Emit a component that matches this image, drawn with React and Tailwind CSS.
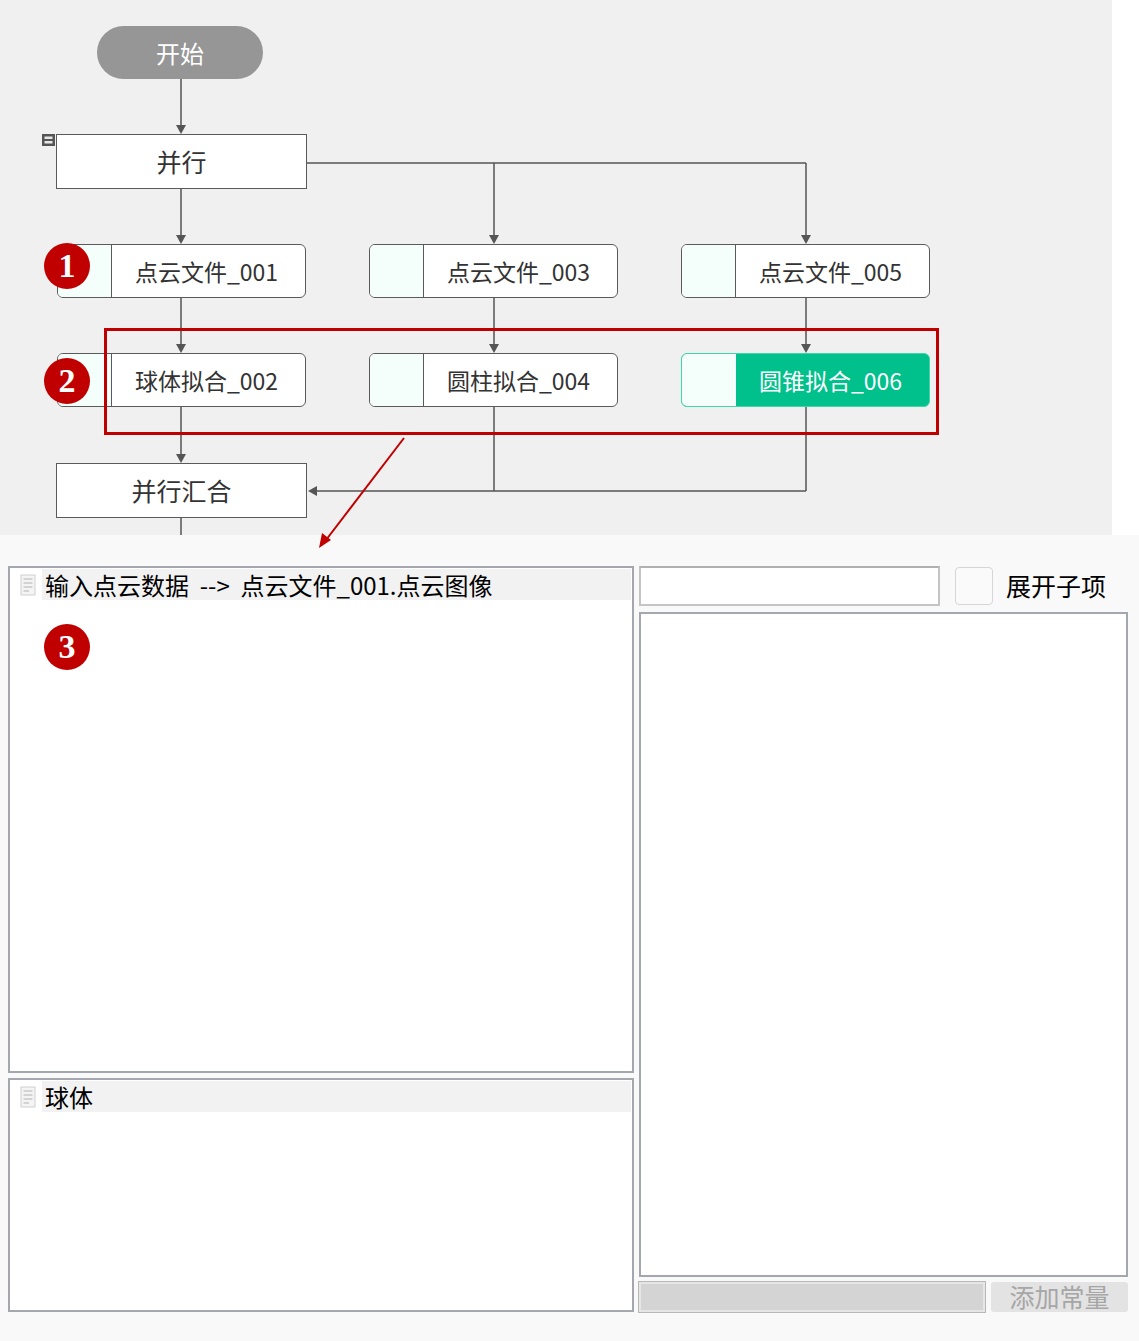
import React from "react";

const FONT = { fontFamily: '"Microsoft YaHei", "Noto Sans CJK SC", "Noto Sans", sans-serif' };

function Badge({ n, className }) {
  return (
    <div
      className={`absolute w-[46px] h-[46px] rounded-full bg-[#c00000] flex items-center justify-center text-white text-[34px] font-bold leading-none ${className}`}
      style={{ fontFamily: '"Liberation Serif", "DejaVu Serif", serif' }}
    >
      {n}
    </div>
  );
}

function FlowNode({ label, className, active }) {
  return (
    <div
      className={`absolute w-[249px] h-[54px] rounded-[6px] border-[1.5px] flex overflow-hidden ${
        active ? "border-[#3fd7a8] bg-[#00c08b]" : "border-[#5a5a5a] bg-white"
      } ${className}`}
    >
      <div className={`w-[54px] h-full bg-[#f4fffc] ${active ? "" : "border-r-[1.5px] border-[#5a5a5a]"}`} />
      <div
        className={`flex-1 flex items-center justify-center text-[23px] pr-1 ${active ? "text-white" : "text-[#333]"}`}
      >
        {label}
      </div>
    </div>
  );
}

function RectNode({ label, className }) {
  return (
    <div
      className={`absolute w-[251px] h-[55px] bg-white border-[1.5px] border-[#5a5a5a] flex items-center justify-center text-[25px] text-[#333] ${className}`}
    >
      {label}
    </div>
  );
}

function Connectors() {
  const s = "#555";
  const down = (x, y) => <polygon points={`${x - 5},${y - 9} ${x + 5},${y - 9} ${x},${y}`} fill={s} />;
  return (
    <svg className="absolute left-0 top-0 overflow-visible" width="1112" height="560">
      <g stroke={s} strokeWidth="1.5" fill="none">
        <line x1="181" y1="79" x2="181" y2="128" />
        <line x1="307" y1="163" x2="806" y2="163" />
        <line x1="494" y1="163" x2="494" y2="238" />
        <line x1="806" y1="163" x2="806" y2="238" />
        <line x1="181" y1="189" x2="181" y2="238" />
        <line x1="181" y1="297" x2="181" y2="347" />
        <line x1="494" y1="297" x2="494" y2="347" />
        <line x1="806" y1="297" x2="806" y2="347" />
        <line x1="181" y1="407" x2="181" y2="457" />
        <line x1="494" y1="407" x2="494" y2="491" />
        <line x1="806" y1="407" x2="806" y2="491" />
        <line x1="806" y1="491" x2="316" y2="491" />
        <line x1="181" y1="518" x2="181" y2="535" />
      </g>
      {down(181, 134)}
      {down(494, 244)}
      {down(806, 244)}
      {down(181, 244)}
      {down(181, 353)}
      {down(494, 353)}
      {down(806, 353)}
      {down(181, 463)}
      <polygon points="308,491 317,486 317,496" fill={s} />
      <g>
        <line x1="404" y1="438" x2="326" y2="540" stroke="#c00000" strokeWidth="2" />
        <polygon points="319,548 322,533 331,540" fill="#c00000" />
      </g>
      <g>
        <rect x="42" y="134" width="13" height="12" fill="#555" />
        <rect x="44.5" y="136.5" width="8" height="2.5" fill="#e8e8e8" />
        <rect x="44.5" y="141" width="8" height="2.5" fill="#e8e8e8" />
      </g>
    </svg>
  );
}

function DocIcon() {
  return (
    <svg width="16" height="22" viewBox="0 0 16 22" className="shrink-0 w-[16px] h-[22px]">
      <rect x="1" y="1" width="14" height="20" fill="#f4f4f4" stroke="#d0d0d0" />
      <line x1="3.5" y1="5" x2="12.5" y2="5" stroke="#c8c8c8" strokeWidth="1.5" />
      <line x1="3.5" y1="9" x2="12.5" y2="9" stroke="#c8c8c8" strokeWidth="1.5" />
      <line x1="3.5" y1="13" x2="12.5" y2="13" stroke="#c8c8c8" strokeWidth="1.5" />
      <line x1="3.5" y1="17" x2="9" y2="17" stroke="#c8c8c8" strokeWidth="1.5" />
    </svg>
  );
}

function Panel({ title, className }) {
  return (
    <div className={`border-2 border-[#a4a7ad] bg-white flex flex-col ${className}`}>
      <div className="flex items-center h-[31px] mt-[1px] pl-[10px] pr-[1px]">
        <DocIcon />
        <div className="ml-[6px] flex-1 h-full bg-[#f2f2f2] flex items-center pl-[3px] text-[24px] text-black whitespace-pre">
          {title}
        </div>
      </div>
    </div>
  );
}

export default function App() {
  return (
    <div className="relative w-[1139px] h-[1341px] bg-[#f9f9f9] overflow-hidden" style={FONT}>
      {/* flow canvas */}
      <div className="flex h-[535px]">
        <div className="relative w-[1112px] h-full bg-[#f0f0f0] z-10">
          <Connectors />
          <div className="absolute left-[97px] top-[26px] w-[166px] h-[53px] rounded-full bg-[#969696] flex items-center justify-center text-white text-[24px]">
            开始
          </div>
          <RectNode label="并行" className="left-[56px] top-[134px]" />
          <FlowNode label="点云文件_001" className="left-[57px] top-[244px]" />
          <FlowNode label="点云文件_003" className="left-[369px] top-[244px]" />
          <FlowNode label="点云文件_005" className="left-[681px] top-[244px]" />
          <FlowNode label="球体拟合_002" className="left-[57px] top-[353px]" />
          <FlowNode label="圆柱拟合_004" className="left-[369px] top-[353px]" />
          <FlowNode label="圆锥拟合_006" className="left-[681px] top-[353px]" active />
          <RectNode label="并行汇合" className="left-[56px] top-[463px]" />
          <div className="absolute left-[104px] top-[328px] w-[835px] h-[107px] border-[3px] border-[#c00000]" />
          <Badge n="1" className="left-[44px] top-[243px]" />
          <Badge n="2" className="left-[44px] top-[358px]" />
        </div>
        <div className="flex-1 bg-white" />
      </div>

      {/* property area */}
      <div className="flex gap-[5px] pl-[8px] pt-[31px]">
        <div className="w-[626px] flex flex-col gap-[5px]">
          <Panel title="输入点云数据  -->  点云文件_001.点云图像" className="h-[507px]" />
          <Panel title="球体" className="h-[234px]" />
        </div>
        <div className="w-[489px] flex flex-col">
          <div className="flex items-center h-[40px]">
            <div className="w-[301px] h-[40px] bg-white border-2 border-[#c4c4c4] border-t-[#b0b0b0]" />
            <div className="ml-[15px] w-[38px] h-[38px] rounded-[4px] border border-[#d6d6d6] bg-[#fafafa]" />
            <div className="ml-[13px] text-[25px] text-black">展开子项</div>
          </div>
          <div className="mt-[6px] h-[665px] bg-white border-2 border-[#a4a7ad]" />
          <div className="mt-[5px] flex h-[30px] gap-[6px]">
            <div className="w-[346px] h-full bg-[#d4d4d4] border-2 border-[#e6e6e6] outline outline-1 outline-[#b8b8b8]" />
            <div className="flex-1 h-full rounded-[3px] bg-[#e3e3e3] flex items-center justify-center text-[25px] text-[#a6a6a6]">
              添加常量
            </div>
          </div>
        </div>
      </div>

      <Badge n="3" className="left-[44px] top-[624px] z-20" />
    </div>
  );
}
